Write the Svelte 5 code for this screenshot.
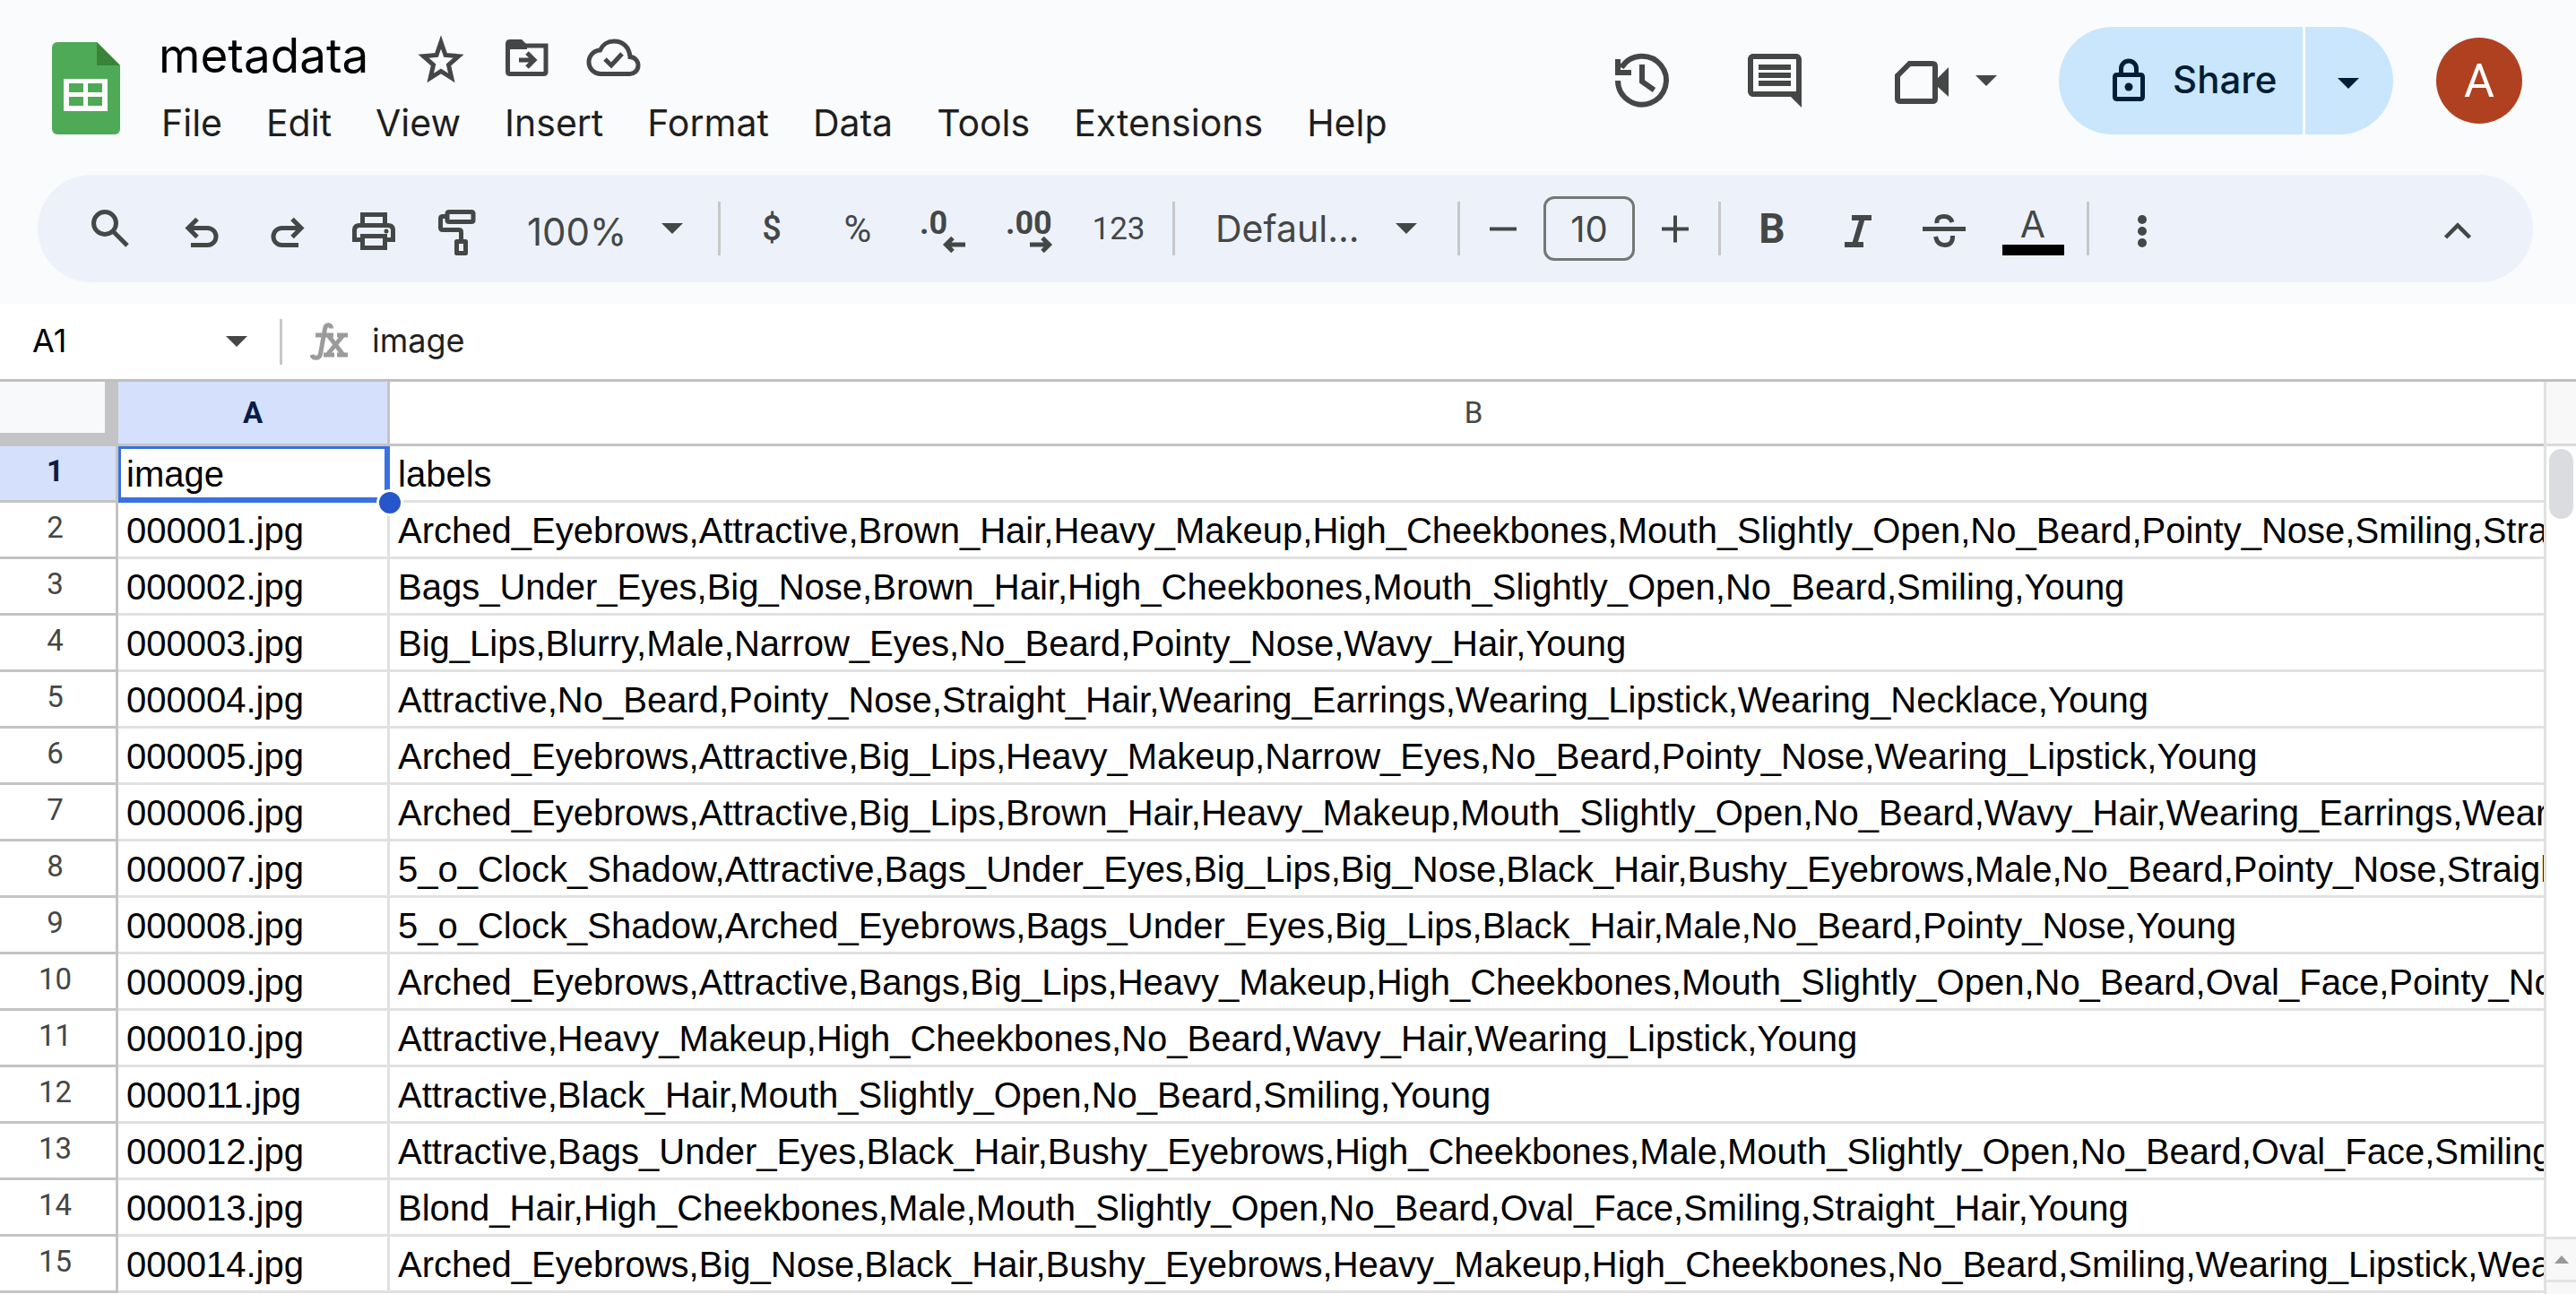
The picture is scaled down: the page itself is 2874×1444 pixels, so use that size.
<script>
  const menus = ['File', 'Edit', 'View', 'Insert', 'Format', 'Data', 'Tools', 'Extensions', 'Help'];

  const rows = [
    ['image', 'labels'],
    ['000001.jpg', 'Arched_Eyebrows,Attractive,Brown_Hair,Heavy_Makeup,High_Cheekbones,Mouth_Slightly_Open,No_Beard,Pointy_Nose,Smiling,Straight_Hair'],
    ['000002.jpg', 'Bags_Under_Eyes,Big_Nose,Brown_Hair,High_Cheekbones,Mouth_Slightly_Open,No_Beard,Smiling,Young'],
    ['000003.jpg', 'Big_Lips,Blurry,Male,Narrow_Eyes,No_Beard,Pointy_Nose,Wavy_Hair,Young'],
    ['000004.jpg', 'Attractive,No_Beard,Pointy_Nose,Straight_Hair,Wearing_Earrings,Wearing_Lipstick,Wearing_Necklace,Young'],
    ['000005.jpg', 'Arched_Eyebrows,Attractive,Big_Lips,Heavy_Makeup,Narrow_Eyes,No_Beard,Pointy_Nose,Wearing_Lipstick,Young'],
    ['000006.jpg', 'Arched_Eyebrows,Attractive,Big_Lips,Brown_Hair,Heavy_Makeup,Mouth_Slightly_Open,No_Beard,Wavy_Hair,Wearing_Earrings,Wearing_Lipstick'],
    ['000007.jpg', '5_o_Clock_Shadow,Attractive,Bags_Under_Eyes,Big_Lips,Big_Nose,Black_Hair,Bushy_Eyebrows,Male,No_Beard,Pointy_Nose,Straight_Hair'],
    ['000008.jpg', '5_o_Clock_Shadow,Arched_Eyebrows,Bags_Under_Eyes,Big_Lips,Black_Hair,Male,No_Beard,Pointy_Nose,Young'],
    ['000009.jpg', 'Arched_Eyebrows,Attractive,Bangs,Big_Lips,Heavy_Makeup,High_Cheekbones,Mouth_Slightly_Open,No_Beard,Oval_Face,Pointy_Nose'],
    ['000010.jpg', 'Attractive,Heavy_Makeup,High_Cheekbones,No_Beard,Wavy_Hair,Wearing_Lipstick,Young'],
    ['000011.jpg', 'Attractive,Black_Hair,Mouth_Slightly_Open,No_Beard,Smiling,Young'],
    ['000012.jpg', 'Attractive,Bags_Under_Eyes,Black_Hair,Bushy_Eyebrows,High_Cheekbones,Male,Mouth_Slightly_Open,No_Beard,Oval_Face,Smiling'],
    ['000013.jpg', 'Blond_Hair,High_Cheekbones,Male,Mouth_Slightly_Open,No_Beard,Oval_Face,Smiling,Straight_Hair,Young'],
    ['000014.jpg', 'Arched_Eyebrows,Big_Nose,Black_Hair,Bushy_Eyebrows,Heavy_Makeup,High_Cheekbones,No_Beard,Smiling,Wearing_Lipstick,Wearing_Necklace']
  ];

  let title = $state('metadata');
  let cellName = $state('A1');
  let formula = $state('image');
  let fontSize = $state('10');
</script>

{#snippet caret()}
  <svg class="caret" viewBox="0 0 24 12" aria-hidden="true"><path d="M0 0h24L12 12z" /></svg>
{/snippet}

<div class="app">
  <header class="header">
    <svg class="logo" viewBox="0 0 76 120" aria-hidden="true">
      <path d="M6 17h44l26 26v71a6 6 0 0 1-6 6H6a6 6 0 0 1-6-6V23a6 6 0 0 1 6-6z" fill="#4eaa56" />
      <path d="M50 17l26 26H50z" fill="#3a8339" />
      <path fill="#fff" fill-rule="evenodd" d="M13 58h49v36H13zM19 63v10h16V63zM40 63v10h16V63zM19 78v10h16V78zM40 78v10h16V78z" />
    </svg>

    <div class="doc">
      <div class="title-row">
        <input class="title" aria-label="Document name" bind:value={title} />
        <button class="tool" aria-label="Star">
          <svg viewBox="0 0 72 72" fill="none" stroke="currentColor" stroke-width="5">
            <path d="M36 21l5 14.500 14.500 1.200-11 9.800 3.300 14.500L36 53.500 24.200 61l3.300-14.500-11-9.800L31 35.500z" stroke-miterlimit="10" />
          </svg>
        </button>
        <button class="tool" aria-label="Move">
          <svg viewBox="0 0 72 72" fill="none" stroke="currentColor" stroke-width="5">
            <path d="M14.500 54V25h42.500v29q0 2.500-2.500 2.500H17q-2.500 0-2.500-2.500z" />
            <path d="M12 29v-6q0-5 5-5h13l6 6v5z" fill="currentColor" stroke="none" />
            <path d="M27 41h15M36 33l8 8-8 8" />
          </svg>
        </button>
        <button class="tool" aria-label="Document status: saved">
          <svg viewBox="0 0 72 72" fill="none" stroke="currentColor" stroke-width="5">
            <path d="M23 56.500h31a9.500 9.500 0 0 0 1-19c-1-11-8-17.500-18-17.500-7 0-13 4-15.500 10A13 13 0 0 0 23 56.500z" />
            <path d="M27 40l7 7 12-13" />
          </svg>
        </button>
      </div>
      <nav class="menu" aria-label="Main menu">
        {#each menus as item}
          <button>{item}</button>
        {/each}
      </nav>
    </div>

    <div class="actions">
      <button class="action" aria-label="Version history">
        <svg viewBox="0 0 72 72" fill="none" stroke="currentColor" stroke-width="6">
          <path d="M9 36A27 27 0 1 0 13 21.500" />
          <path d="M9 12v15h15M36 18v19l13.500 9.500" />
        </svg>
      </button>
      <button class="action" aria-label="Show all comments">
        <svg viewBox="0 0 24 24" fill="currentColor">
          <path d="M21.990 4c0-1.100-.89-2-1.990-2H4c-1.100 0-2 .9-2 2v12c0 1.100.9 2 2 2h14l4 4-.01-18zM20 4v12H4V4h16zM6 12h12v2H6zm0-3h12v2H6zm0-3h12v2H6z" />
        </svg>
      </button>
      <button class="action meet" aria-label="Join a call">
        <svg viewBox="0 0 72 72" fill="none" stroke="currentColor" stroke-width="6">
          <path d="M22.500 17H48q3 0 3 3v36q0 3-3 3H12q-3 0-3-3V30.500z" />
          <path d="M54 33l12-12v33L54 43z" fill="currentColor" stroke="none" />
        </svg>
        {@render caret()}
      </button>
      <div class="share">
        <button class="share-main">
          <svg viewBox="0 0 36 48" fill="none" stroke="currentColor" stroke-width="5" aria-hidden="true">
            <path d="M5 18.500h26q2.500 0 2.500 2.500v22q0 2.500-2.500 2.500H5q-2.500 0-2.500-2.500V21q0-2.500 2.500-2.500z" />
            <path d="M9.500 18v-6.500a8.500 8.500 0 0 1 17 0V18" />
            <circle cx="18" cy="32" r="4.500" fill="currentColor" stroke="none" />
          </svg>
          Share
        </button>
        <button class="share-more" aria-label="Quick sharing actions">{@render caret()}</button>
      </div>
      <button class="avatar" aria-label="Account">A</button>
    </div>
  </header>

  <div class="toolbar" role="toolbar" aria-label="Formatting">
    <button class="tool search" aria-label="Search the menus">
      <svg viewBox="0 0 72 72" fill="none" stroke="currentColor" stroke-width="5">
        <circle cx="30" cy="30" r="12.500" /><path d="M39 39l16 16" />
      </svg>
    </button>
    <button class="tool" aria-label="Undo">
      <svg viewBox="0 0 72 72" fill="none" stroke="currentColor" stroke-width="5">
        <path d="M24 54.500h18.500a9 9 0 0 0 0-19H22M31 25.500l-10 10 10 10" />
      </svg>
    </button>
    <button class="tool" aria-label="Redo">
      <svg viewBox="0 0 72 72" fill="none" stroke="currentColor" stroke-width="5">
        <path d="M48 54.500H29.500a9 9 0 0 1 0-19H50M41 25.500l10 10-10 10" />
      </svg>
    </button>
    <button class="tool" aria-label="Print">
      <svg viewBox="0 0 72 72" fill="none" stroke="currentColor" stroke-width="5">
        <path d="M23.500 33V20.500h25V33M22 48.500h-7.500V38q0-5.500 5.500-5.500h32q5.500 0 5.500 5.500v10.500H50" />
        <path d="M23.500 44.500h25v13h-25z" /><circle cx="50" cy="39" r="2.500" fill="currentColor" stroke="none" />
      </svg>
    </button>
    <button class="tool" aria-label="Paint format">
      <svg viewBox="0 0 72 72" fill="none" stroke="currentColor" stroke-width="5">
        <path d="M24 17.500h25q2 0 2 2v7q0 2-2 2H24q-2 0-2-2v-7q0-2 2-2z" />
        <path d="M22 22.500h-5q-2.500 0-2.500 2.500v10q0 2.500 2.500 2.500h18q2.500 0 2.500 2.500v9M32.500 50.500h10v13h-10z" stroke-linejoin="round" />
      </svg>
    </button>
    <div class="dropdown zoom">
      <select aria-label="Zoom"><option>100%</option></select>
      {@render caret()}
    </div>
    <span class="divider"></span>
    <button class="tool currency" aria-label="Format as currency">$</button>
    <button class="tool percent" aria-label="Format as percent">%</button>
    <button class="tool" aria-label="Decrease decimal places">
      <svg viewBox="0 0 72 72">
        <text x="9" y="42">.0</text>
        <path d="M60 54H40M46 46.500L38.500 54l7.500 7.500" fill="none" stroke="currentColor" stroke-width="5" />
      </svg>
    </button>
    <button class="tool" aria-label="Increase decimal places">
      <svg viewBox="0 0 72 72">
        <text x="9" y="42">.00</text>
        <path d="M36 54h20M50 46.500l7.500 7.500-7.500 7.500" fill="none" stroke="currentColor" stroke-width="5" />
      </svg>
    </button>
    <button class="tool wide formats" aria-label="More formats">123</button>
    <span class="divider"></span>
    <div class="dropdown font">
      <select aria-label="Font"><option>Defaul...</option></select>
      {@render caret()}
    </div>
    <span class="divider"></span>
    <button class="tool step" aria-label="Decrease font size">
      <svg viewBox="0 0 72 72"><path d="M21 36.500h30" stroke="currentColor" stroke-width="4" /></svg>
    </button>
    <input class="size" aria-label="Font size" bind:value={fontSize} />
    <button class="tool step" aria-label="Increase font size">
      <svg viewBox="0 0 72 72"><path d="M21 36.500h30M36 21.500v30" stroke="currentColor" stroke-width="4" /></svg>
    </button>
    <span class="divider"></span>
    <button class="tool bold" aria-label="Bold">B</button>
    <button class="tool" aria-label="Italic">
      <svg viewBox="0 0 72 72" fill="none" stroke="currentColor" stroke-width="6">
        <path d="M29 24h22M21 54h21M41 24l-9 30" />
      </svg>
    </button>
    <button class="tool" aria-label="Strikethrough">
      <svg viewBox="0 0 72 72" fill="none" stroke="currentColor" stroke-width="5">
        <path d="M12 36.500h48" />
        <path d="M28 30q-1-7.500 8-7.500 7 0 9 6.500M26.500 45q2 9.500 10 9.500 9.500 0 9-10.500" />
      </svg>
    </button>
    <button class="tool wide color" aria-label="Text color">A</button>
    <span class="divider"></span>
    <button class="tool" aria-label="More">
      <svg viewBox="0 0 72 72" fill="currentColor">
        <circle cx="38" cy="26" r="5" /><circle cx="38" cy="39" r="5" /><circle cx="38" cy="52" r="5" />
      </svg>
    </button>
    <button class="tool collapse" aria-label="Hide the menus">
      <svg viewBox="0 0 72 72" fill="none" stroke="currentColor" stroke-width="4.500"><path d="M22.500 46L36 32.500 49.500 46" /></svg>
    </button>
  </div>

  <div class="formula-bar">
    <input class="cell-name" aria-label="Name box" bind:value={cellName} />
    <button class="name-menu" aria-label="Named ranges">{@render caret()}</button>
    <span class="divider short"></span>
    <svg class="fx" viewBox="0 0 42 42" fill="none" stroke="currentColor" stroke-width="5" aria-hidden="true">
      <path d="M23.500 6.500c0-5-6-5.500-7 .5l-5 28c-1 5-8 6-9.500 1" />
      <path d="M6 14h20M30 14h12M15 36h12M30 36h12M20 14l17 22M37 14L19 36" />
    </svg>
    <input class="formula" aria-label="Formula" bind:value={formula} />
  </div>

  <main class="sheet">
    <table>
      <colgroup><col class="col-num" /><col class="col-a" /><col /></colgroup>
      <thead>
        <tr>
          <th class="corner" aria-label="Select all"></th>
          <th class="selected" scope="col">A</th>
          <th class="col-b" scope="col">B</th>
        </tr>
      </thead>
      <tbody>
        {#each rows as [image, labels], i}
          <tr>
            <th class:selected={i === 0} scope="row">{i + 1}</th>
            <td class:active={i === 0}>{image}{#if i === 0}<span class="handle"></span>{/if}</td>
            <td class="clip">{labels}</td>
          </tr>
        {/each}
      </tbody>
    </table>
    <aside class="rail" aria-hidden="true">
      <div class="rail-head"></div>
      <div class="rail-track"><div class="thumb"></div></div>
      <div class="rail-up"><svg viewBox="0 0 16 9"><path d="M8 0l8 9H0z" /></svg></div>
      <div class="rail-foot"></div>
    </aside>
  </main>
</div>

<style>
  :global(body) {
    margin: 0;
    background: #fff;
  }
  .app {
    display: flex;
    flex-direction: column;
    height: 100vh;
    overflow: hidden;
    background: #f9fbfd;
    color: #444746;
    font-family: Inter, 'Liberation Sans', sans-serif;
    font-size: 41px;
  }
  button,
  input,
  select {
    margin: 0;
    padding: 0;
    border: 0;
    background: none;
    color: inherit;
    font: inherit;
    appearance: none;
    outline: none;
    box-sizing: border-box;
  }
  svg {
    display: block;
    flex: none;
  }
  .caret {
    width: 24px;
    height: 12px;
    fill: currentColor;
  }

  .header {
    display: flex;
    align-items: flex-start;
    height: 180px;
    margin-bottom: 15px;
    padding: 0 60px 0 58px;
    box-sizing: border-box;
    flex: none;
  }
  .logo {
    width: 76px;
    height: 120px;
    margin: 30px 43px 0 0;
  }
  .doc {
    padding-top: 30px;
  }
  .title-row {
    display: flex;
    align-items: center;
    height: 64px;
    margin-bottom: 13px;
  }
  .title {
    width: 267px;
    height: 64px;
    font-size: 53px;
    color: #000;
  }
  .menu {
    display: flex;
    gap: 49px;
    padding-left: 3px;
    color: #1f1f1f;
  }
  .menu button {
    line-height: 60px;
  }
  .actions {
    display: flex;
    align-items: center;
    height: 180px;
    margin-left: auto;
  }
  .action {
    display: flex;
    align-items: center;
    justify-content: center;
    width: 148px;
    height: 120px;
  }
  .action svg:first-child {
    width: 72px;
    height: 72px;
  }
  .meet {
    width: 243px;
    justify-content: flex-start;
    gap: 24px;
    padding-left: 54px;
  }
  .share {
    display: flex;
    gap: 3px;
    margin-right: 48px;
    color: #001d35;
  }
  .share button {
    display: flex;
    align-items: center;
    height: 120px;
    background: #c9e6fd;
  }
  .share .share-main {
    gap: 31px;
    width: 272px;
    padding: 0 0 3px 60px;
    border-radius: 60px 0 0 60px;
    font-size: 42px;
    font-weight: 500;
  }
  .share-main svg {
    width: 36px;
    height: 48px;
  }
  .share .share-more {
    justify-content: center;
    width: 98px;
    padding: 6px 3px 0 0;
    border-radius: 0 60px 60px 0;
  }
  .avatar {
    width: 96px;
    height: 96px;
    border-radius: 50%;
    background: #b04120;
    color: #fff;
    font-family: Roboto, sans-serif;
    font-size: 52px;
  }

  .toolbar {
    display: flex;
    align-items: center;
    flex: none;
    height: 120px;
    margin: 0 48px 24px 42px;
    padding: 0 36px 0 33px;
    border-radius: 60px;
    background: #edf2fa;
  }
  .tool {
    display: flex;
    align-items: center;
    justify-content: center;
    flex: none;
    width: 96px;
    height: 90px;
  }
  .tool svg {
    width: 72px;
    height: 72px;
  }
  .tool text {
    fill: currentColor;
    font: 700 36px Roboto, sans-serif;
  }
  .search {
    margin-right: 6px;
  }
  .wide {
    width: 102px;
  }
  .step {
    width: 78px;
  }
  .currency,
  .percent,
  .formats {
    font-family: Roboto, sans-serif;
  }
  .currency {
    font-size: 38px;
    font-weight: 500;
  }
  .percent {
    font-size: 42px;
  }
  .formats {
    font-size: 35px;
  }
  .bold {
    font-family: Roboto, sans-serif;
    font-size: 46px;
    font-weight: 700;
  }
  .color {
    flex-direction: column;
    justify-content: flex-end;
    height: 90px;
    padding-bottom: 15px;
    line-height: 46px;
  }
  .color::after {
    content: '';
    width: 69px;
    height: 12px;
    background: #000;
  }
  .collapse {
    margin-left: auto;
  }
  .divider {
    flex: none;
    width: 3px;
    height: 60px;
    margin: 0 9px;
    background: #c7c7c7;
  }
  .dropdown {
    display: grid;
    align-items: center;
    flex: none;
    height: 90px;
  }
  .dropdown select,
  .dropdown .caret {
    grid-area: 1 / 1;
  }
  .dropdown select {
    width: 100%;
    height: 90px;
  }
  .dropdown .caret {
    justify-self: end;
    pointer-events: none;
  }
  .zoom {
    width: 231px;
    font-size: 42px;
  }
  .zoom select {
    padding: 6px 0 0 27px;
  }
  .zoom .caret {
    margin-right: 30px;
  }
  .font {
    width: 297px;
  }
  .font select {
    padding-left: 36px;
  }
  .font .caret {
    margin-right: 36px;
  }
  .size {
    width: 102px;
    height: 72px;
    margin: 0 6px;
    border: 3px solid #747775;
    border-radius: 12px;
    font-size: 40px;
    text-align: center;
  }

  .formula-bar {
    display: flex;
    align-items: center;
    flex: none;
    height: 84px;
    border-bottom: 3px solid #c0c0c0;
    background: #fff;
    font-size: 36px;
  }
  .cell-name {
    width: 216px;
    height: 84px;
    padding: 0 0 3px 36px;
    color: #000;
  }
  .name-menu {
    display: flex;
    align-items: center;
    justify-content: center;
    width: 96px;
    height: 84px;
  }
  .short {
    height: 51px;
    margin: 0;
  }
  .fx {
    width: 42px;
    height: 42px;
    margin: 0 27px 0 31px;
    color: #9b9b9b;
  }
  .formula {
    flex: 1;
    height: 84px;
    padding-bottom: 3px;
    color: #1f1f1f;
  }

  .sheet {
    display: flex;
    flex: 1;
    min-height: 0;
    overflow: hidden;
    background: #fff;
  }
  table {
    flex: 1;
    min-width: 0;
    width: 0;
    table-layout: fixed;
    border-collapse: separate;
    border-spacing: 0;
    align-self: flex-start;
  }
  .col-num {
    width: 132px;
  }
  .col-a {
    width: 303px;
  }
  th,
  td {
    box-sizing: border-box;
    height: 63px;
    padding: 0;
    border-bottom: 3px solid #e1e1e1;
    white-space: nowrap;
  }
  th {
    border-color: #c4c4c4;
    font: 400 33px/56px Roboto, sans-serif;
  }
  tbody th {
    padding: 0 6px 4px 0;
    border-right: 3px solid #c4c4c4;
  }
  thead th {
    height: 72px;
    border-right: 3px solid #c4c4c4;
    line-height: 69px;
  }
  thead .col-b {
    padding-left: 15px;
    border-right: 0;
  }
  thead .corner {
    border-right: 15px solid #c4c4c4;
    border-bottom: 15px solid #c4c4c4;
    background: #f8f9fb;
  }
  th.selected {
    background: #d5e1fc;
    color: #0a1c48;
    font-weight: 700;
  }
  td {
    padding: 3px 0 0 9px;
    border-right: 3px solid #e1e1e1;
    color: #000;
    font: 40px/57px 'Liberation Sans', Arial, sans-serif;
  }
  .clip {
    overflow: hidden;
    border-right: 0;
  }
  td.active {
    position: relative;
    padding: 2px 0 0 6px;
    border: solid #3871e0;
    border-width: 3px 6px 6px 3px;
    line-height: 52px;
  }
  .handle {
    position: absolute;
    right: -21px;
    bottom: -21px;
    width: 24px;
    height: 24px;
    border: 3px solid #fff;
    border-radius: 50%;
    background: #2656c9;
  }

  .rail {
    display: flex;
    flex-direction: column;
    flex: none;
    width: 33px;
    border-left: 3px solid #e0e2e0;
  }
  .rail-head {
    height: 69px;
    border-bottom: 3px solid #dadada;
    background: #f8f8f8;
  }
  .rail-track {
    flex: 1;
    padding: 3px;
  }
  .thumb {
    height: 78px;
    border-radius: 14px;
    background: #dadce0;
  }
  .rail-up {
    display: flex;
    align-items: center;
    height: 45px;
    padding-left: 9px;
    border: solid #e0e2e0;
    border-width: 3px 0;
    background: #f8f8f8;
  }
  .rail-up svg {
    width: 16px;
    height: 9px;
    fill: #999;
  }
  .rail-foot {
    height: 13px;
    background: #f8f8f8;
  }
</style>
